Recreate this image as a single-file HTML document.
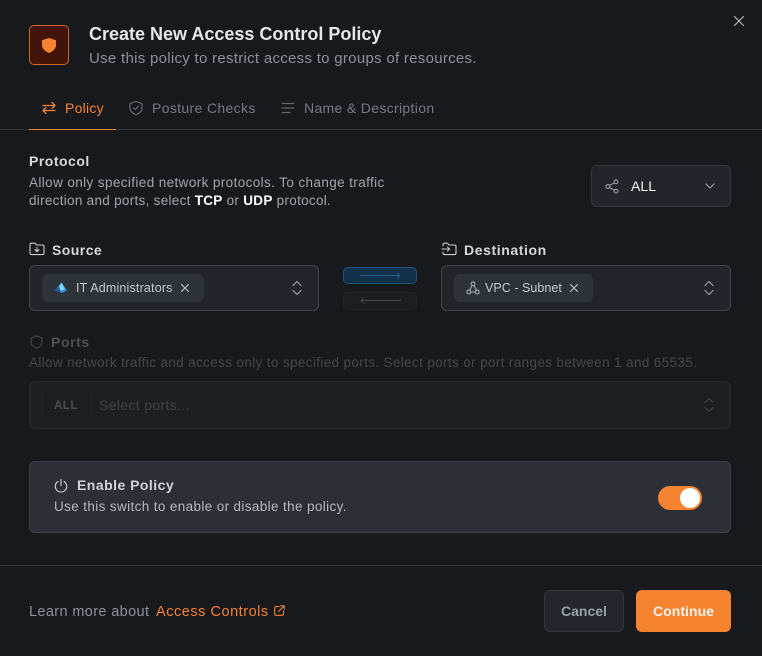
<!DOCTYPE html>
<html><head><meta charset="utf-8">
<style>
*{box-sizing:border-box;margin:0;padding:0}
html,body{width:762px;height:656px;overflow:hidden;background:#18191d}
body{position:relative;font-family:"Liberation Sans",sans-serif;color:#a7b1b9}
.t{position:absolute;white-space:nowrap;line-height:20px}
.b{position:absolute}
svg{position:absolute;fill:none;stroke-linecap:round;stroke-linejoin:round}
</style></head><body>
<div class="b" style="left:29px;top:25px;width:40px;height:40px;background:#43140a;border:1px solid #c8682a;border-radius:5px"></div>
<svg style="left:41px;top:37px" width="16" height="17" viewBox="0 0 16 17"><path d="M8 1L15 3.2V8.5C15 11.5 12 14.5 8 16C4 14.5 1 11.5 1 8.5V3.2Z" fill="#f68330"/></svg>
<div class="t" style="left:89px;top:24px;font-size:18px;font-weight:700;color:#e4e7e9;letter-spacing:.0px">Create New Access Control Policy</div>
<div class="t" style="left:89px;top:49px;font-size:15px;color:#8a929b;letter-spacing:.29px">Use this policy to restrict access to groups of resources.</div>
<svg style="left:733px;top:15px" width="12" height="12" viewBox="0 0 12 12" stroke="#b4bac0" stroke-width="1.2"><path d="M1.5 1.5L10.5 10.5M10.5 1.5L1.5 10.5"/></svg>

<svg style="left:42px;top:101px" width="14" height="14" viewBox="0 0 14 14" stroke="#f68330" stroke-width="1.3"><path d="M1 4.5H13M10 1.5L13 4.5L10 7.5M13 9.5H1M4 6.5L1 9.5L4 12.5"/></svg>
<div class="t" style="left:65px;top:98px;font-size:14px;color:#f68330;letter-spacing:.25px">Policy</div>
<svg style="left:129px;top:100px" width="14" height="16" viewBox="0 0 14 16" stroke="#6b737d" stroke-width="1.1"><path d="M7 1.5L13 3.5V8C13 11 10 13.5 7 14.8C4 13.5 1 11 1 8V3.5Z"/><path d="M4.7 8L6.4 9.6L9.4 6.4"/></svg>
<div class="t" style="left:152px;top:98px;font-size:14px;color:#737b85;letter-spacing:.35px">Posture Checks</div>
<svg style="left:281px;top:102px" width="14" height="12" viewBox="0 0 14 12" stroke="#5f6670" stroke-width="1.2"><path d="M1 1.5H13M1 6H13M1 10.5H9"/></svg>
<div class="t" style="left:304px;top:98px;font-size:14px;color:#737b85;letter-spacing:.33px">Name &amp; Description</div>
<div class="b" style="left:0;top:129px;width:762px;height:1px;background:#33353a"></div>
<div class="b" style="left:29px;top:129px;width:87px;height:1px;background:#f68330"></div>

<div class="t" style="left:29px;top:151px;font-size:14px;font-weight:700;color:#d5d9dc;letter-spacing:.5px">Protocol</div>
<div class="t" style="left:29px;top:173px;font-size:13.5px;color:#a0a6ad;letter-spacing:.39px">Allow only specified network protocols. To change traffic</div>
<div class="t" style="left:29px;top:191px;font-size:13.5px;color:#a0a6ad;letter-spacing:.29px">direction and ports, select <b style="color:#fff">TCP</b> or <b style="color:#fff">UDP</b> protocol.</div>

<div class="b" style="left:591px;top:165px;width:140px;height:42px;background:#22252a;border:1px solid #33363c;border-radius:6px"></div>
<svg style="left:605px;top:179px" width="14" height="15" viewBox="0 0 14 15" stroke="#9aa1a8" stroke-width="1.1"><circle cx="2.8" cy="7.5" r="1.9"/><circle cx="11" cy="2.8" r="1.9"/><circle cx="11" cy="12.2" r="1.9"/><path d="M4.5 6.5L9.3 3.8M4.5 8.5L9.3 11.2"/></svg>
<div class="t" style="left:631px;top:176px;font-size:14px;color:#f4f5f6;font-weight:400;letter-spacing:.05px">ALL</div>
<svg style="left:704px;top:181px" width="12" height="10" viewBox="0 0 12 10" stroke="#9aa1a8" stroke-width="1.2"><path d="M2 3L6 7L10 3"/></svg>

<svg style="left:29px;top:242px" width="16" height="14" viewBox="0 0 16 14" stroke="#c8ccd0" stroke-width="1.1"><path d="M1 3C1 2 1.6 1.2 2.5 1.2H6L7.5 3H13.5C14.4 3 15 3.6 15 4.5V11C15 12 14.4 12.6 13.5 12.6H2.5C1.6 12.6 1 12 1 11Z"/><path d="M8 5.5V9.5M6 7.7L8 9.7L10 7.7"/></svg>
<div class="t" style="left:52px;top:240px;font-size:14px;font-weight:700;color:#d5d9dc;letter-spacing:.45px">Source</div>
<div class="b" style="left:29px;top:265px;width:290px;height:46px;background:#22252a;border:1px solid #41454b;border-radius:6px"></div>
<div class="b" style="left:42px;top:274px;width:162px;height:28px;background:#2e3239;border-radius:6px"></div>
<svg style="left:54px;top:281px" width="14" height="13" viewBox="0 0 14 13"><path d="M7.5 1L13 9.5L8 12L1 9.5Z" fill="#2f8fd0"/><path d="M7.5 2L11 8L7.5 10L4 7.5Z" fill="#7fd3f5"/><path d="M1 9.5L5 5.5L7 11.5Z" fill="#1a5f9a"/></svg>
<div class="t" style="left:76px;top:278px;font-size:12.5px;color:#c5cad0;letter-spacing:.18px">IT Administrators</div>
<svg style="left:180px;top:283px" width="10" height="10" viewBox="0 0 10 10" stroke="#c0c5ca" stroke-width="1.1"><path d="M1.5 1.5L8.5 8.5M8.5 1.5L1.5 8.5"/></svg>
<svg style="left:291px;top:280px" width="12" height="16" viewBox="0 0 12 16" stroke="#9aa1a8" stroke-width="1.2"><path d="M2 5.5L6 1.5L10 5.5M2 10.5L6 14.5L10 10.5"/></svg>

<div class="b" style="left:343px;top:267px;width:74px;height:17px;background:#123048;border:1px solid #1d567f;border-radius:5px"></div>
<svg style="left:360px;top:271px" width="41" height="9" viewBox="0 0 41 9" stroke="#1f5f8c" stroke-width=".9"><path d="M.5 4.5H40M37.5 2L40 4.5L37.5 7"/></svg>
<div class="b" style="left:343px;top:292px;width:74px;height:18px;background:#1c1e22;border:1px solid #222428;border-radius:5px"></div>
<svg style="left:360px;top:296px" width="41" height="9" viewBox="0 0 41 9" stroke="#44474c" stroke-width=".9"><path d="M1 4.5H40.5M3.5 2L1 4.5L3.5 7"/></svg>

<svg style="left:441px;top:242px" width="16" height="14" viewBox="0 0 16 14" stroke="#c8ccd0" stroke-width="1.1"><path d="M2 4V2.5C2 1.7 2.5 1.2 3.2 1.2H6.5L8 3H13.5C14.4 3 15 3.6 15 4.5V11C15 12 14.4 12.6 13.5 12.6H3.2C2.5 12.6 2 12 2 11.2V10"/><path d="M1 7H8.5M6.5 5L8.5 7L6.5 9"/></svg>
<div class="t" style="left:464px;top:240px;font-size:14px;font-weight:700;color:#d5d9dc;letter-spacing:.6px">Destination</div>
<div class="b" style="left:441px;top:265px;width:290px;height:46px;background:#22252a;border:1px solid #41454b;border-radius:6px"></div>
<div class="b" style="left:454px;top:274px;width:139px;height:28px;background:#2e3239;border-radius:6px"></div>
<svg style="left:466px;top:281px" width="14" height="14" viewBox="0 0 14 14" stroke="#a7adb4" stroke-width="1.1"><circle cx="7" cy="2.8" r="1.9"/><circle cx="2.8" cy="11" r="1.9"/><circle cx="11.2" cy="11" r="1.9"/><path d="M6 4.5L3.7 9.2M8 4.5L10.3 9.2M4.7 11H9.3"/></svg>
<div class="t" style="left:485px;top:278px;font-size:12.5px;color:#c5cad0;letter-spacing:.04px">VPC - Subnet</div>
<svg style="left:569px;top:283px" width="10" height="10" viewBox="0 0 10 10" stroke="#c0c5ca" stroke-width="1.1"><path d="M1.5 1.5L8.5 8.5M8.5 1.5L1.5 8.5"/></svg>
<svg style="left:703px;top:280px" width="12" height="16" viewBox="0 0 12 16" stroke="#9aa1a8" stroke-width="1.2"><path d="M2 5.5L6 1.5L10 5.5M2 10.5L6 14.5L10 10.5"/></svg>

<svg style="left:30px;top:335px" width="13" height="14" viewBox="0 0 13 14" stroke="#44474c" stroke-width="1.1"><path d="M6.5 1L12 3V7C12 10 9.5 12 6.5 13C3.5 12 1 10 1 7V3Z"/></svg>
<div class="t" style="left:51px;top:332px;font-size:14px;font-weight:700;color:#4c4f54;letter-spacing:.6px">Ports</div>
<div class="t" style="left:29px;top:353px;font-size:13.5px;color:#44474c;letter-spacing:.36px">Allow network traffic and access only to specified ports. Select ports or port ranges between 1 and 65535.</div>
<div class="b" style="left:29px;top:381px;width:702px;height:48px;background:#1d1f23;border:1px solid #27292d;border-radius:6px"></div>
<div class="b" style="left:42px;top:390px;width:49px;height:30px;background:#1c1e21;border:1px solid #202226;border-radius:5px"></div>
<div class="t" style="left:54px;top:396px;font-size:11.5px;font-weight:700;color:#4a4d52;letter-spacing:.5px">ALL</div>
<div class="t" style="left:99px;top:395px;font-size:14px;color:#3f4247;letter-spacing:.35px">Select ports...</div>
<svg style="left:703px;top:397px" width="12" height="16" viewBox="0 0 12 16" stroke="#3f4247" stroke-width="1.2"><path d="M2 5.5L6 1.5L10 5.5M2 10.5L6 14.5L10 10.5"/></svg>

<div class="b" style="left:29px;top:461px;width:702px;height:72px;background:#2c2f36;border:1px solid #3e4147;border-radius:6px"></div>
<svg style="left:54px;top:478px" width="14" height="15" viewBox="0 0 14 15" stroke="#d0d3d7" stroke-width="1.1"><path d="M7 1.5V7.5M4 3.5A5.7 5.7 0 1 0 10 3.5"/></svg>
<div class="t" style="left:77px;top:475px;font-size:14px;font-weight:700;color:#d0d4d8;letter-spacing:.47px">Enable Policy</div>
<div class="t" style="left:54px;top:497px;font-size:13.5px;color:#b4b9bf;letter-spacing:.37px">Use this switch to enable or disable the policy.</div>
<div class="b" style="left:658px;top:486px;width:44px;height:24px;background:#f68330;border-radius:12px"></div>
<div class="b" style="left:680px;top:488px;width:20px;height:20px;background:#fff;border-radius:50%"></div>

<div class="b" style="left:0;top:565px;width:762px;height:1px;background:#33353a"></div>
<div class="t" style="left:29px;top:602px;font-size:14.5px;color:#8a929b;letter-spacing:.37px">Learn more about</div>
<div class="t" style="left:156px;top:602px;font-size:14.5px;color:#f68330;letter-spacing:.53px;font-weight:400">Access Controls</div>
<svg style="left:274px;top:605px" width="11" height="11" viewBox="0 0 11 11" stroke="#f68330" stroke-width="1.1"><path d="M5 1.5H2C1.2 1.5 .7 2 .7 2.8V9C.7 9.8 1.2 10.3 2 10.3H8.2C9 10.3 9.5 9.8 9.5 9V6M4.5 6.5L10 1M6.8 .8H10.2V4.2"/></svg>

<div class="b" style="left:544px;top:590px;width:80px;height:42px;background:#23262b;border:1px solid #33363c;border-radius:6px"></div>
<div class="t" style="left:544px;top:601px;width:80px;text-align:center;font-size:14px;color:#9aa0a7;letter-spacing:0;font-weight:700">Cancel</div>
<div class="b" style="left:636px;top:590px;width:95px;height:42px;background:#f68330;border-radius:6px"></div>
<div class="t" style="left:636px;top:601px;width:95px;text-align:center;font-size:14px;color:#f7f2ec;letter-spacing:.05px;font-weight:700">Continue</div>
</body></html>
